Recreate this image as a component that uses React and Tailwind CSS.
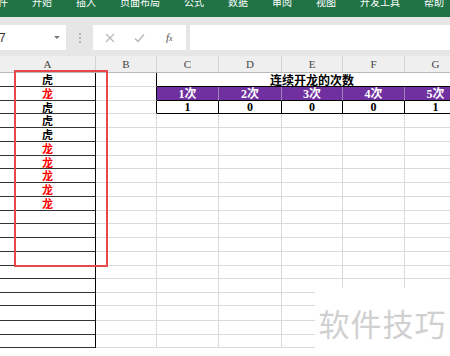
import React from 'react';

const tabs = ['文件', '开始', '插入', '页面布局', '公式', '数据', '审阅', '视图', '开发工具', '帮助'];
const colA = ['虎', '龙', '虎', '虎', '虎', '龙', '龙', '龙', '龙', '龙'];
const heights = [14, 14, 13, 14, 14, 14, 13, 14, 14, 14, 13, 14, 14, 14, 13, 14, 13, 15, 14, 13];
const widths = ['w-[96px]', 'w-[61px]', 'w-[62px]', 'w-[63px]', 'w-[61px]', 'w-[62px]', 'w-[62px]'];
const letters = ['A', 'B', 'C', 'D', 'E', 'F', 'G'];
const counts = ['1', '0', '0', '0', '1'];

const serif = "font-['Liberation_Serif','Noto_Sans_CJK_SC',serif]";

// one sheet row, A..G
const SheetRow = ({ i }) => {
  const h = heights[i] === 13 ? 'h-[13px]' : heights[i] === 15 ? 'h-[15px]' : 'h-[14px]';
  const a = colA[i] || '';
  return (
    <div className={`flex shrink-0 ${h}`}>
      <div
        className={`${widths[0]} shrink-0 border-r border-b border-r-black border-b-[#333333] flex items-center justify-center text-[11px] font-bold leading-[11px] ${a === '龙' ? 'text-[#ff0000]' : 'text-black'}`}
      >
        {a}
      </div>
      <div className={`${widths[1]} shrink-0 border-r border-b border-b-[#dadada] ${i < 3 ? 'border-r-black' : 'border-r-[#dadada]'}`} />

      {i === 0 && (
        <div className="w-[310px] shrink-0 border-b border-black flex items-center justify-center text-[12px] font-bold leading-[12px] text-black">
          连续开龙的次数
        </div>
      )}

      {i === 1 &&
        counts.map((_, k) => (
          <div
            key={k}
            className={`${widths[k + 2]} shrink-0 bg-[#7030a0] border-r border-b border-r-[#9f82bd] border-b-black flex items-center justify-center text-[12px] font-bold leading-[12px] text-white ${serif}`}
          >
            {k + 1}次
          </div>
        ))}

      {i === 2 &&
        counts.map((c, k) => (
          <div
            key={k}
            className={`${widths[k + 2]} shrink-0 border-r border-b border-black flex items-center justify-center text-[12px] font-bold leading-[12px] text-black ${serif}`}
          >
            {c}
          </div>
        ))}

      {i > 2 &&
        counts.map((_, k) => (
          <div key={k} className={`${widths[k + 2]} shrink-0 border-r border-b border-[#dadada]`} />
        ))}
    </div>
  );
};

const App = () => {
  return (
    <div className="relative w-[450px] h-[356px] overflow-hidden bg-white font-['Noto_Sans_CJK_SC','Liberation_Sans',sans-serif]">
      {/* Ribbon tabs */}
      <div className="h-[17px] bg-[#217346] flex items-start overflow-hidden">
        <div className="flex -ml-[24px] -mt-[3px]">
          {tabs.map((t) => (
            <div key={t} className="px-[12px] text-[10px] leading-[10px] text-white whitespace-nowrap">
              {t}
            </div>
          ))}
        </div>
      </div>

      {/* Formula bar */}
      <div className="h-[39px] bg-[#e6e6e6] pt-[8px] flex items-start">
        <div className="w-[66px] h-[25px] bg-white flex items-center justify-between pr-[6px]">
          <span className="-ml-[1px] text-[12px] text-[#333] font-['Liberation_Sans',sans-serif]">7</span>
          <span className="w-0 h-0 border-l-[3px] border-r-[3px] border-t-[3px] border-l-transparent border-r-transparent border-t-[#777]" />
        </div>
        <div className="w-[27px] h-[25px] flex flex-col items-center justify-center gap-[2px]">
          <span className="w-[2px] h-[2px] bg-[#b5b5b5]" />
          <span className="w-[2px] h-[2px] bg-[#b5b5b5]" />
          <span className="w-[2px] h-[2px] bg-[#b5b5b5]" />
        </div>
        <div className="w-[93px] h-[25px] bg-white flex items-center">
          <svg width="10" height="10" viewBox="0 0 10 10" className="ml-[12px]">
            <path d="M1 1L9 9M9 1L1 9" stroke="#b8b8b8" strokeWidth="1.2" fill="none" />
          </svg>
          <svg width="11" height="10" viewBox="0 0 11 10" className="ml-[19px]">
            <path d="M1 5.5L4 8.5L10 1.5" stroke="#b8b8b8" strokeWidth="1.4" fill="none" />
          </svg>
          <span className="ml-[21px] text-[11px] italic text-[#555] font-['Liberation_Serif',serif]">
            f<span className="text-[8px]">x</span>
          </span>
        </div>
        <div className="ml-[4px] flex-1 h-[25px] bg-white" />
      </div>

      {/* Column headers */}
      <div className="flex h-[17px] bg-[#efefef] border-b border-[#b8b8b8]">
        {letters.map((l, k) => (
          <div
            key={l}
            className={`${widths[k]} shrink-0 border-r border-[#d2d2d2] flex items-center justify-center text-[11px] text-[#444] ${serif}`}
          >
            {l}
          </div>
        ))}
      </div>

      {/* Cells */}
      <div className="flex flex-col">
        {heights.map((_, i) => (
          <SheetRow key={i} i={i} />
        ))}
      </div>

      {/* Red highlight around column A */}
      <div className="absolute left-[14px] top-[70px] w-[94px] h-[197px] border-2 border-[#e8474c]" />

      {/* Watermark */}
      <div className="absolute left-[315px] top-[288px] right-0 bottom-0 bg-white flex items-center justify-center">
        <span className="text-[31px] leading-none text-[#d0d0d0] tracking-[1px]">软件技巧</span>
      </div>
    </div>
  );
};

export default App;
